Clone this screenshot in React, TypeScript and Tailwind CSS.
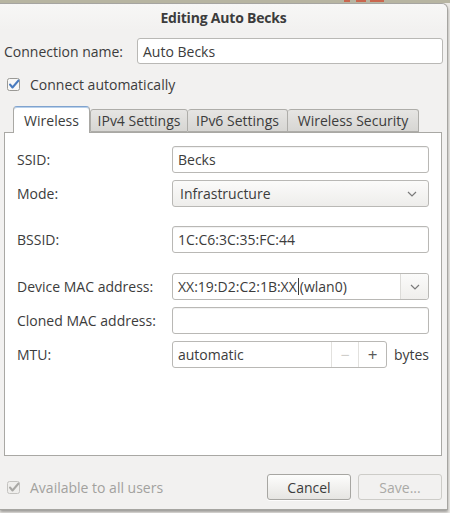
import React from "react";

function Check({ disabled = false }: { disabled?: boolean }) {
  return (
    <svg width="13" height="13" viewBox="0 0 13 13" className="shrink-0">
      <rect
        x="0.5"
        y="0.5"
        width="12"
        height="12"
        rx="2"
        fill={disabled ? "#efeeec" : "#f8f8f7"}
        stroke={disabled ? "#c4c3c0" : "#9a9995"}
      />
      <path
        d="M3 6.5 L5.5 9.5 L11.5 2.5"
        fill="none"
        stroke={disabled ? "#a9a8a5" : "#4a7cc0"}
        strokeWidth="2"
        strokeLinecap="round"
        strokeLinejoin="round"
      />
    </svg>
  );
}

function Chevron() {
  return (
    <svg width="10" height="6" viewBox="0 0 10 6">
      <path d="M1 1 L5 5 L9 1" fill="none" stroke="#7a7a7a" strokeWidth="1.2" />
    </svg>
  );
}

function Entry({ children }: { children?: React.ReactNode }) {
  return (
    <div className="flex-1 h-[27px] bg-white border border-[#b9b8b5] rounded-[3px] shadow-[inset_0_1px_1px_rgba(0,0,0,0.06)] flex items-center px-[5px] text-[#3c3c3c]">
      {children}
    </div>
  );
}

function Row({
  label,
  children,
  className = "",
}: {
  label: string;
  children: React.ReactNode;
  className?: string;
}) {
  return (
    <div className={"flex items-center h-[27px] " + className}>
      <div className="w-[155px] shrink-0">{label}</div>
      {children}
    </div>
  );
}

export default function App() {
  return (
    <div
      className="w-[450px] h-[513px] bg-[#eceae6] overflow-hidden relative text-[14px] text-[#3c3c3c]"
      style={{ fontFamily: '"Open Sans", "Noto Sans", sans-serif' }}
    >
      {/* window behind the dialog */}
      <div className="h-[3px] bg-[#b7b5a2] relative">
        <div className="absolute left-[344px] top-0 w-[6px] h-[2px] bg-[#c9674f]"></div>
        <div className="absolute left-[356px] top-0 w-[10px] h-[2px] bg-[#c9674f]"></div>
        <div className="absolute left-[370px] top-0 w-[14px] h-[2px] bg-[#c9674f]"></div>
      </div>
      <div className="w-[448px] h-[507px] bg-[#f2f1f0] border-t border-r border-b border-[#a6a5a1] rounded-tr-[6px] shadow-[0_2px_3px_rgba(0,0,0,0.35)] flex flex-col">
        {/* Title */}
        <div className="h-[26px] flex items-center justify-center font-bold tracking-[-0.2px] bg-gradient-to-b from-[#f7f7f6] to-[#f2f1f0] rounded-tr-[6px]">
          Editing Auto Becks
        </div>

        {/* Connection name */}
        <div className="flex items-center h-[26px] mt-[8px] pl-[4px] pr-[4px]">
          <div className="w-[133px] shrink-0">Connection name:</div>
          <div className="flex-1 h-[26px] bg-white border border-[#b9b8b5] rounded-[3px] flex items-center px-[5px]">
            Auto Becks
          </div>
        </div>

        {/* Connect automatically */}
        <div className="flex items-center gap-[10px] h-[20px] mt-[10px] pl-[7px]">
          <Check />
          <span>Connect automatically</span>
        </div>

        {/* Tabs */}
        <div className="mt-[12px] px-[4px] mr-[1px]">
          <div className="flex items-end h-[26px] pl-[9px] relative z-10">
            <div className="h-[27px] -mb-px px-[9px] w-[77px] flex items-center justify-center bg-white border border-[#a9a8a4] border-b-0 border-t-[#7fa3cf] rounded-t-[4px] shadow-[inset_0_1px_0_#b9d0ea]">
              Wireless
            </div>
            <div className="h-[23px] w-[98px] flex items-center justify-center bg-gradient-to-b from-[#e6e5e3] to-[#d7d6d3] border border-[#aeada9] rounded-t-[3px]">
              IPv4 Settings
            </div>
            <div className="h-[23px] w-[100px] flex items-center justify-center bg-gradient-to-b from-[#e6e5e3] to-[#d7d6d3] border border-l-0 border-[#aeada9] rounded-t-[3px]">
              IPv6 Settings
            </div>
            <div className="h-[23px] w-[131px] flex items-center justify-center bg-gradient-to-b from-[#e6e5e3] to-[#d7d6d3] border border-l-0 border-[#aeada9] rounded-t-[3px]">
              Wireless Security
            </div>
          </div>

          <div className="h-[324px] bg-white border border-[#a9a8a4] pt-[13px] pl-[12px] pr-[12px]">
            <Row label="SSID:">
              <Entry>Becks</Entry>
            </Row>
            <Row label="Mode:" className="mt-[7px]">
              <div className="flex-1 h-[27px] bg-gradient-to-b from-[#fbfbfa] to-[#eeedeb] border border-[#b9b8b5] rounded-[3px] flex items-center justify-between pl-[7px] pr-[11px]">
                <span>Infrastructure</span>
                <Chevron />
              </div>
            </Row>
            <Row label="BSSID:" className="mt-[19px]">
              <Entry>1C:C6:3C:35:FC:44</Entry>
            </Row>
            <Row label="Device MAC address:" className="mt-[20px]">
              <div className="flex-1 h-[27px] bg-white border border-[#b9b8b5] rounded-[3px] flex items-center">
                <div className="flex-1 flex items-center px-[5px]">
                  <span>XX:19:D2:C2:1B:XX</span>
                  <span className="w-px h-[17px] bg-[#3c3c3c] mx-[1px]"></span>
                  <span>(wlan0)</span>
                </div>
                <div className="w-[28px] h-full border-l border-[#dcdbd8] flex items-center justify-center bg-gradient-to-b from-[#fbfbfa] to-[#efeeec] rounded-r-[3px]">
                  <Chevron />
                </div>
              </div>
            </Row>
            <Row label="Cloned MAC address:" className="mt-[7px]">
              <Entry />
            </Row>
            <Row label="MTU:" className="mt-[7px]">
              <div className="w-[215px] h-[27px] bg-white border border-[#b9b8b5] rounded-[3px] flex items-center">
                <div className="flex-1 px-[5px]">automatic</div>
                <div className="w-[27px] h-full border-l border-[#e2e1de] flex items-center justify-center text-[#cfcecb] text-[16px]">
                  −
                </div>
                <div className="w-[28px] h-full border-l border-[#e2e1de] flex items-center justify-center text-[#5a5a5a] text-[17px]">
                  +
                </div>
              </div>
              <span className="ml-auto">bytes</span>
            </Row>
          </div>
        </div>

        {/* Footer */}
        <div className="flex items-center mt-[18px] pl-[7px] pr-[5px]">
          <Check disabled />
          <span className="ml-[10px] text-[#a2a19e]">Available to all users</span>
          <div className="ml-auto flex gap-[7px]">
            <button className="w-[84px] h-[26px] rounded-[3px] border border-[#a7a6a2] bg-gradient-to-b from-[#fdfdfc] to-[#e6e5e2] text-[#3c3c3c] shadow-[0_1px_0_rgba(255,255,255,0.8)]">
              Cancel
            </button>
            <button className="w-[84px] h-[26px] rounded-[3px] border border-[#cdccc8] bg-[#f2f1f0] text-[#aaa9a6]">
              Save...
            </button>
          </div>
        </div>
      </div>
    </div>
  );
}
